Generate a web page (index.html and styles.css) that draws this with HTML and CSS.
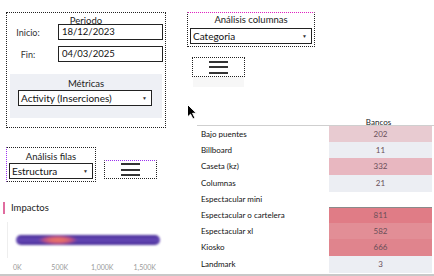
FILE: index.html
```html
<!DOCTYPE html>
<html lang="es">
<head>
  <meta charset="UTF-8" />
  <link rel="stylesheet" href="styles.css">
</head>
<body>
  <div class="dash">
    <div class="left-col">
      <div class="period-box">
        <div class="box-title">Periodo</div>
        <div class="date-row">
          <span class="date-label">Inicio:</span>
          <div class="date-input">18/12/2023</div>
        </div>
        <div class="date-row">
          <span class="date-label">Fin:</span>
          <div class="date-input">04/03/2025</div>
        </div>
        <div class="metric-panel">
          <div class="box-title">Métricas</div>
          <div class="dropdown metric-select">
            <span>Activity (Inserciones)</span>
            <span class="caret">▼</span>
          </div>
        </div>
      </div>

      <div class="filter-row">
        <div class="filter-box rows-box">
          <div class="box-title">Análisis filas</div>
          <div class="dropdown">
            <span>Estructura</span>
            <span class="caret">▼</span>
          </div>
        </div>
        <div class="menu-box rows-menu">
          <span></span><span></span><span></span>
        </div>
      </div>

      <div class="impact">
        <div class="impact-title">Impactos</div>
        <div class="impact-chart">
          <div class="blob"></div>
        </div>
        <div class="axis">
          <span>0K</span>
          <span>500K</span>
          <span>1,000K</span>
          <span>1,500K</span>
        </div>
      </div>
    </div>

    <div class="right-col">
      <div class="filter-box cols-box">
        <div class="box-title">Análisis columnas</div>
        <div class="dropdown">
          <span>Categoria</span>
          <span class="caret">▼</span>
        </div>
      </div>
      <div class="menu-box cols-menu">
        <span></span><span></span><span></span>
      </div>

      <div class="heat-table">
        <div class="heat-head">
          <span></span>
          <span class="col-name">Bancos</span>
          <span></span>
        </div>
        <div class="heat-row">
          <span class="row-name">Bajo puentes</span>
          <span class="cell" style="background:#e8cbd1">202</span>
          <span class="cell-next" style="background:#e8cbd1"></span>
        </div>
        <div class="heat-row">
          <span class="row-name">Billboard</span>
          <span class="cell" style="background:#eceef3">11</span>
          <span class="cell-next" style="background:#eceef3"></span>
        </div>
        <div class="heat-row">
          <span class="row-name">Caseta (kz)</span>
          <span class="cell" style="background:#e8b7c0">332</span>
          <span class="cell-next" style="background:#eceef3"></span>
        </div>
        <div class="heat-row">
          <span class="row-name">Columnas</span>
          <span class="cell" style="background:#eceef3">21</span>
          <span class="cell-next" style="background:#eceef3"></span>
        </div>
        <div class="heat-row">
          <span class="row-name">Espectacular mini</span>
          <span class="cell"></span>
          <span class="cell-next"></span>
        </div>
        <div class="heat-row hovered">
          <span class="row-name">Espectacular o cartelera</span>
          <span class="cell" style="background:#e07c86">811</span>
          <span class="cell-next" style="background:#eccfd4"></span>
        </div>
        <div class="heat-row">
          <span class="row-name">Espectacular xl</span>
          <span class="cell" style="background:#e28e96">582</span>
          <span class="cell-next" style="background:#eceef3"></span>
        </div>
        <div class="heat-row">
          <span class="row-name">Kiosko</span>
          <span class="cell" style="background:#e0848d">666</span>
          <span class="cell-next" style="background:#eceef3"></span>
        </div>
        <div class="heat-row">
          <span class="row-name">Landmark</span>
          <span class="cell" style="background:#eceef3">3</span>
          <span class="cell-next" style="background:#eceef3"></span>
        </div>
      </div>
    </div>
  </div>
  <div class="bottom-bar"></div>

  <svg class="cursor" width="12" height="17" viewBox="0 0 12 17">
    <path d="M1.5 1.5 L1.5 14 L4.5 11.2 L7 16 L9 15 L6.6 10.3 L10.5 10.3 Z" fill="#000" stroke="#fff" stroke-width="1"/>
  </svg>
</body>
</html>
```

FILE: styles.css
```css
body {
  margin: 0;
  width: 434px;
  height: 276px;
  overflow: hidden;
  background: #fff;
  font-family: 'Lato', sans-serif;
  color: #333;
  position: relative;
}

.dash {
  display: flex;
  height: 274px;
  padding-top: 12px;
  box-sizing: border-box;
}

.left-col {
  width: 166px;
}

.right-col {
  margin-left: 21px;
  flex: 1;
}

.box-title {
  text-align: center;
  font-size: 9.5px;
  line-height: 10px;
  color: #222;
}

/* periodo */
.period-box {
  margin-left: 6px;
  width: 160px;
  height: 116px;
  box-sizing: border-box;
  border: 1px dotted #222;
}

.period-box > .box-title {
  margin-top: 3px;
  margin-bottom: -2px;
}

.date-row {
  display: flex;
  align-items: center;
  margin-bottom: 6px;
}

.date-label {
  width: 42px;
  text-align: center;
  font-size: 9px;
  color: #333;
}

.date-input {
  margin-left: 9px;
  width: 105px;
  height: 16px;
  box-sizing: border-box;
  border: 1px solid #222;
  font-size: 9.5px;
  line-height: 14px;
  padding-left: 3px;
  color: #111;
}

.metric-panel {
  margin: 12px 3px 0 3px;
  height: 44px;
  background: #eef0f5;
  padding-top: 5px;
  box-sizing: border-box;
}

.metric-select {
  margin: 1px 10px 0 8px;
}

/* dropdowns */
.dropdown {
  display: flex;
  justify-content: space-between;
  align-items: center;
  height: 16px;
  box-sizing: border-box;
  border: 1px solid #222;
  background: #fff;
  padding: 0 4px 0 2px;
  font-size: 10px;
  color: #111;
}

.caret {
  font-size: 5px;
  color: #333;
}

.filter-box {
  box-sizing: border-box;
  border: 1px dotted #222;
  height: 35px;
}

.filter-box .box-title {
  margin-top: 4px;
}

.filter-box .dropdown {
  margin: 1px 2px 0 2px;
}

.cols-box {
  width: 128px;
  border-top-color: #e020c0;
}

.cols-box .box-title {
  margin-top: 2px;
}

.cols-box .dropdown {
  margin-top: 3px;
}

/* hamburger boxes */
.menu-box {
  box-sizing: border-box;
  border: 1px dotted #222;
  width: 53px;
  height: 20px;
  display: flex;
  flex-direction: column;
  align-items: center;
  justify-content: center;
  gap: 3.5px;
}

.menu-box span {
  display: block;
  width: 19px;
  height: 2px;
  background: #333;
}

.cols-menu {
  margin: 10px 0 0 5px;
  box-shadow: 0 11px 0 -1px #f7f7f7;
}

.filter-row {
  display: flex;
  align-items: flex-start;
  margin-top: 19px;
}

.rows-box {
  margin-left: 6px;
  width: 90px;
  border-left-color: #9a30f0;
}

.rows-menu {
  margin: 13px 0 0 8px;
  height: 19px;
  border-top-color: #9a30f0;
}

/* impactos */
.impact {
  margin-top: 20px;
}

.impact-title {
  margin-left: 3px;
  padding-left: 6px;
  border-left: 2px solid #e06c9f;
  font-size: 9.5px;
  line-height: 12px;
  color: #222;
}

.impact-chart {
  margin: 8px 0 0 7px;
  height: 36px;
  border-left: 1px solid #eeeeee;
  padding-top: 13px;
  box-sizing: border-box;
}

.blob {
  margin-left: 8px;
  width: 144px;
  height: 10px;
  border-radius: 5px;
  background:
    radial-gradient(ellipse 20px 5px at 42px 5px, #ec7468 0%, #e06a6c 40%, #b8508a 70%, rgba(120, 70, 170, 0) 100%),
    linear-gradient(#4a2f98, #6548b6 50%, #4a2f98);
  filter: blur(0.8px);
}

.axis {
  display: flex;
  margin: 5px 0 0 -4px;
}

.axis span {
  width: 44px;
  text-align: center;
  font-size: 7px;
  color: #9a9a9a;
}

/* heat table */
.heat-table {
  margin: 39px 0 0 10px;
}

.heat-head {
  display: grid;
  grid-template-columns: 130px 103px 1fr;
  height: 9px;
  border-bottom: 1px solid #cfcfcf;
}

.col-name {
  padding-top: 2px;
  text-align: center;
  font-size: 8px;
  line-height: 8px;
  color: #222;
}

.heat-row {
  display: grid;
  grid-template-columns: 130px 103px 1fr;
  column-gap: 2px;
  height: 16.2px;
  align-items: stretch;
}

.row-name {
  padding-left: 4px;
  font-size: 8px;
  line-height: 17px;
  color: #111;
}

.cell {
  text-align: center;
  font-size: 8px;
  line-height: 17px;
  color: #6a4f58;
}

.hovered .cell,
.hovered .cell-next {
  box-shadow: inset 0 1px 0 #8a8a8a;
}

.bottom-bar {
  height: 2px;
  background: #c8c8c8;
}

.cursor {
  position: absolute;
  left: 186px;
  top: 103px;
}
```
